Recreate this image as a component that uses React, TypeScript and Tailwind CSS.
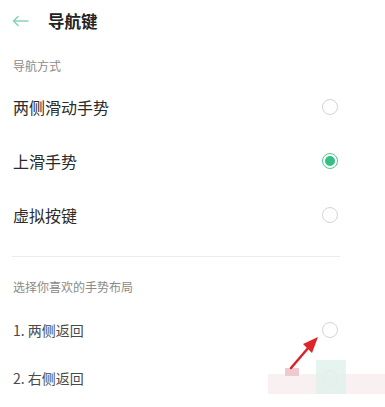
import React from 'react';

const FONT = "font-['Noto_Sans_CJK_SC','Noto_Sans',sans-serif]";

function Radio({ checked }: { checked?: boolean }) {
    if (checked) {
        return (
            <div className="w-4 h-4 rounded-full border-[1.5px] border-[#4fc996] flex items-center justify-center">
                <div className="w-[10px] h-[10px] rounded-full bg-[#35bf82]" />
            </div>
        );
    }
    return <div className="w-4 h-4 rounded-full border-[1.5px] border-[#d4d4d4]" />;
}

function Row({ label, checked, big }: { label: string; checked?: boolean; big?: boolean }) {
    return (
        <div className={`flex items-center justify-between ${big ? 'h-[54px]' : 'h-[48px]'}`}>
            <span className={big ? 'text-[16px] leading-[16px] text-[#2b2b2b]' : 'text-[14px] leading-[14px] text-[#4a4a4a]'}>{label}</span>
            <Radio checked={checked} />
        </div>
    );
}

export default function App() {
    return (
        <div className={`relative w-[385px] h-[407px] bg-white overflow-hidden ${FONT}`}>
            {/* Header */}
            <div className="h-[42px] flex items-center pl-3">
                <svg width="17" height="12" viewBox="0 0 17 12" fill="none" stroke="#86d6b4" strokeWidth="1.6" strokeLinecap="round" strokeLinejoin="round">
                    <path d="M16 6H1.5M6 1.5L1.5 6L6 10.5" />
                </svg>
                <span className="ml-[19px] text-[16.5px] leading-[17px] font-bold text-[#222]">导航键</span>
            </div>

            <div className="pl-[13px] pr-[47px]">
                <div className="pt-[18px] pb-[8px] text-[12px] leading-[12px] text-[#8a8a8a]">导航方式</div>
                <Row label="两侧滑动手势" big />
                <Row label="上滑手势" big checked />
                <Row label="虚拟按键" big />

                <div className="mt-[14px] h-px bg-[#ececec] -ml-px mr-[-2px]" />

                <div className="pt-[24px] text-[12px] leading-[12px] text-[#8a8a8a]">选择你喜欢的手势布局</div>
                <div className="mt-[13px]">
                    <Row label="1. 两侧返回" />
                    <Row label="2. 右侧返回" />
                </div>
            </div>

            {/* watermark blocks */}
            <div className="absolute left-[268px] top-[374px] w-[117px] h-[20px] bg-[#f7e9ec] opacity-70" />
            <div className="absolute left-[316px] top-[360px] w-[30px] h-[34px] bg-[#dff1ea] opacity-80" />
            <div className="absolute left-[285px] top-[368px] w-[14px] h-[8px] bg-[#eec9cd]" />

            {/* red arrow */}
            <svg className="absolute left-0 top-0" width="385" height="407" viewBox="0 0 385 407">
                <path d="M291 368L309 347" stroke="#d8232a" strokeWidth="2.5" strokeLinecap="round" />
                <path d="M318 337L303 344L312 353Z" fill="#e0242b" />
            </svg>
        </div>
    );
}
